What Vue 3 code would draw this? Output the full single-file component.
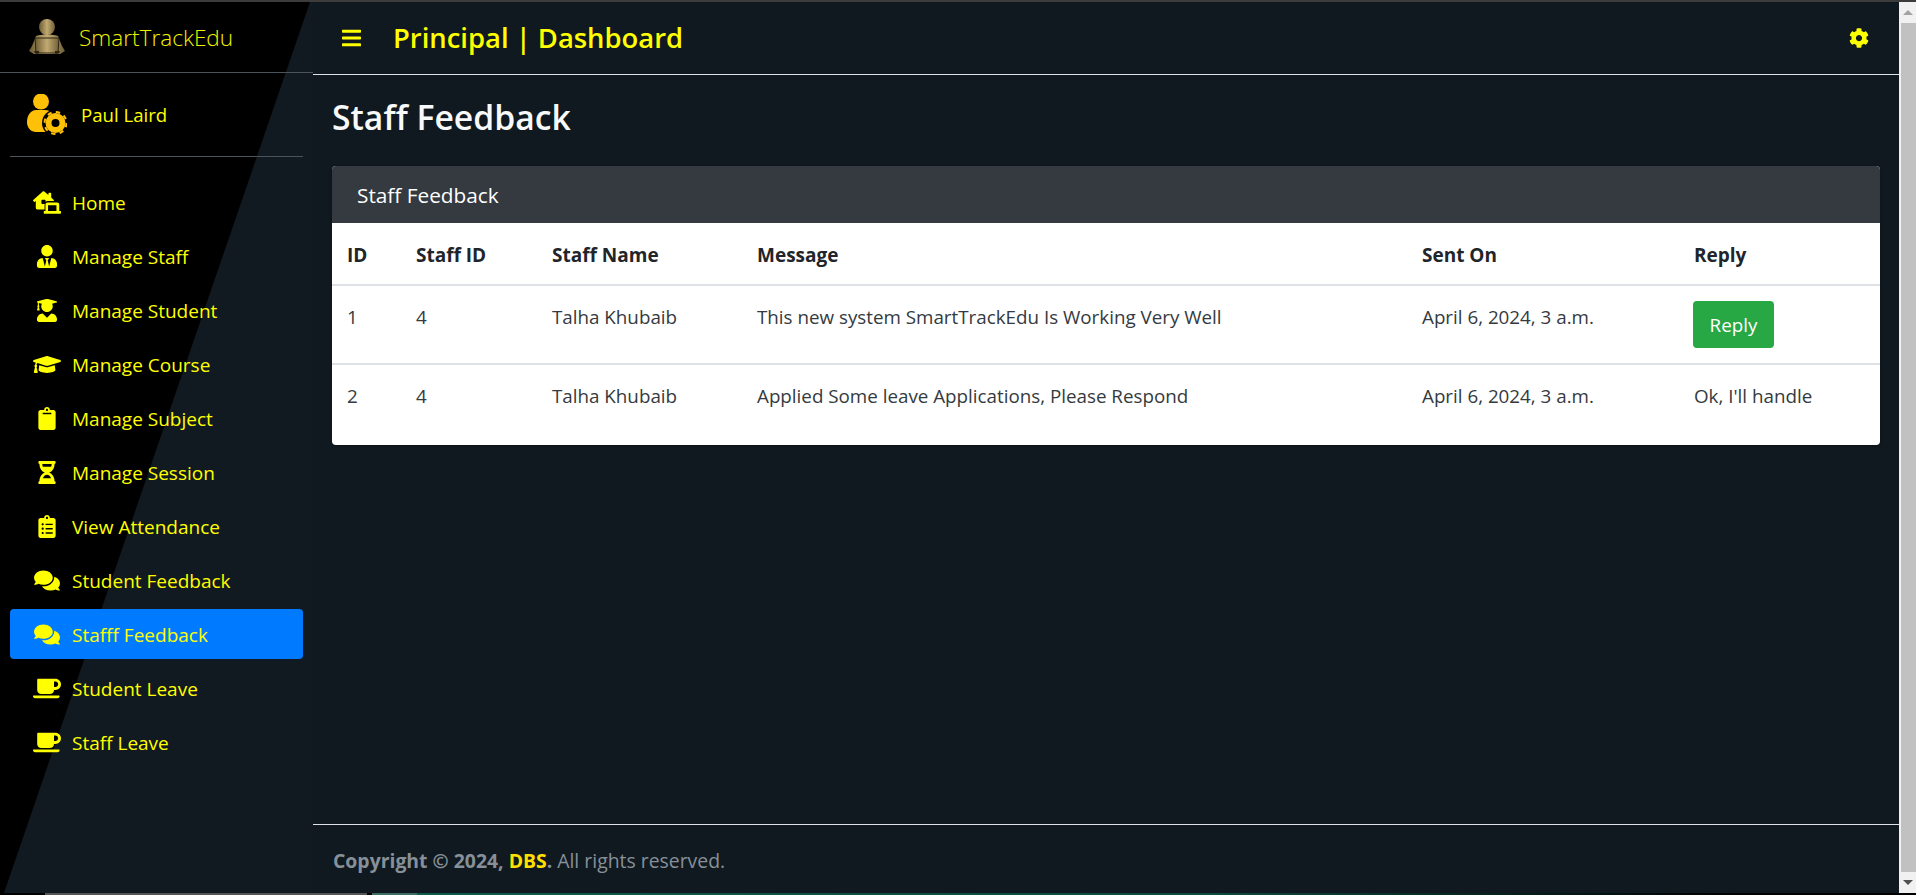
<template>
  <div class="page">
    <div class="top-strip"></div>
    <div class="window">
      <aside class="sidebar">
        <div class="brand">
          <svg class="brand-logo" viewBox="0 0 36 36">
            <defs>
              <linearGradient id="gold" x1="0" x2="1" y1="0" y2="0">
                <stop offset="0" stop-color="#6b5a33" />
                <stop offset="0.5" stop-color="#c2ab72" />
                <stop offset="1" stop-color="#6f5d36" />
              </linearGradient>
            </defs>
            <circle cx="18" cy="8" r="8" fill="url(#gold)" />
            <path d="M7 17c3-1 6-1.500 11-1.500s8 .5 11 1.500l4 10 3 5-5 3H5l-5-3 3-5z" fill="url(#gold)" />
            <path d="M6 19h24l-1 15H7z" fill="url(#gold)" stroke="#2c2413" stroke-width="1" />
            <path d="M5 32h5v2.500H6zM26 32h5l-1 2.500h-4z" fill="#2c2413" />
          </svg>
          <span class="brand-text">SmartTrackEdu</span>
        </div>
        <div class="user-panel">
          <svg class="user-icon" viewBox="0 0 40 41">
            <circle cx="14" cy="7.500" r="8" fill="#ffc107" />
            <path d="M0 28c0-7 4-12 9-12h9c3 0 5 1 7 3v19H9c-5 0-9-4-9-10z" fill="#ffc107" />
            <circle cx="28.500" cy="29" r="13.500" fill="#000" />
            <circle cx="28.500" cy="29" r="7" fill="none" stroke="#ffc107" stroke-width="6" />
            <circle cx="28.500" cy="29" r="11" fill="none" stroke="#ffc107" stroke-width="2" stroke-dasharray="4.300 4.340" />
          </svg>
          <span>Paul Laird</span>
        </div>
        <nav class="nav">
          <a v-for="item in navItems" :key="item.label" class="nav-link" :class="{ active: item.active }">
            <svg class="nav-icon" :viewBox="item.box">
              <path :d="item.d" fill-rule="evenodd" />
            </svg>
            <span class="nav-label">{{ item.label }}</span>
          </a>
        </nav>
      </aside>

      <div class="main">
        <header class="topbar">
          <svg class="bars" viewBox="0 0 448 512"><path :d="barsIcon" /></svg>
          <h2 class="topbar-title">Principal | Dashboard</h2>
          <svg class="cog" viewBox="0 0 512 512"><path :d="cogIcon" /></svg>
        </header>

        <main class="content">
          <h1>Staff Feedback</h1>
          <section class="card">
            <div class="card-header">Staff Feedback</div>
            <table>
              <thead>
                <tr>
                  <th class="col-id">ID</th>
                  <th class="col-staff">Staff ID</th>
                  <th class="col-name">Staff Name</th>
                  <th class="col-msg">Message</th>
                  <th class="col-sent">Sent On</th>
                  <th>Reply</th>
                </tr>
              </thead>
              <tbody>
                <tr v-for="row in rows" :key="row.id">
                  <td>{{ row.id }}</td>
                  <td>{{ row.staffId }}</td>
                  <td>{{ row.name }}</td>
                  <td>{{ row.message }}</td>
                  <td>{{ row.sent }}</td>
                  <td>
                    <button v-if="!row.reply" class="btn-reply">Reply</button>
                    <template v-else>{{ row.reply }}</template>
                  </td>
                </tr>
              </tbody>
            </table>
          </section>
        </main>

        <footer class="footer">
          <strong>Copyright © 2024, <span class="dbs">DBS</span>.</strong> All rights reserved.
        </footer>
      </div>

      <div class="scrollbar">
        <div class="scroll-btn"><i class="arrow-up"></i></div>
        <div class="scroll-thumb"></div>
        <div class="scroll-btn"><i class="arrow-down"></i></div>
      </div>
    </div>
    <div class="bottom-strip">
      <span class="task-gray"></span>
      <span class="task-light"></span>
      <span class="task-teal"></span>
    </div>
  </div>
</template>

<script setup>
const barsIcon =
  "M16 132h416c8.837 0 16-7.163 16-16V76c0-8.837-7.163-16-16-16H16C7.163 60 0 67.163 0 76v40c0 8.837 7.163 16 16 16zm0 160h416c8.837 0 16-7.163 16-16v-40c0-8.837-7.163-16-16-16H16c-8.837 0-16 7.163-16 16v40c0 8.837 7.163 16 16 16zm0 160h416c8.837 0 16-7.163 16-16v-40c0-8.837-7.163-16-16-16H16c-8.837 0-16 7.163-16 16v40c0 8.837 7.163 16 16 16z";
const cogIcon =
  "M487.4 315.7l-42.6-24.6c4.3-23.2 4.3-47 0-70.2l42.6-24.6c4.9-2.8 7.1-8.6 5.5-14-11.1-35.6-30-67.8-54.7-94.6-3.8-4.1-10-5.1-14.8-2.3L380.8 110c-17.9-15.4-38.5-27.3-60.8-35.1V25.8c0-5.6-3.9-10.5-9.4-11.7-36.7-8.2-74.3-7.8-109.2 0-5.5 1.2-9.4 6.1-9.4 11.7V75c-22.2 7.9-42.8 19.8-60.8 35.1L88.7 85.5c-4.9-2.8-11-1.9-14.8 2.3-24.7 26.7-43.6 58.9-54.7 94.6-1.7 5.4.6 11.2 5.5 14L67.3 221c-4.3 23.2-4.3 47 0 70.2l-42.6 24.6c-4.9 2.8-7.1 8.6-5.5 14 11.1 35.6 30 67.8 54.7 94.6 3.8 4.1 10 5.1 14.8 2.3l42.6-24.6c17.9 15.4 38.5 27.3 60.8 35.1v49.2c0 5.6 3.9 10.5 9.4 11.7 36.7 8.2 74.3 7.8 109.2 0 5.5-1.2 9.4-6.1 9.4-11.7v-49.2c22.2-7.9 42.8-19.8 60.8-35.1l42.6 24.6c4.9 2.8 11 1.9 14.8-2.3 24.7-26.7 43.6-58.9 54.7-94.6 1.5-5.5-.7-11.3-5.6-14.1zM256 336c-44.1 0-80-35.9-80-80s35.9-80 80-80 80 35.9 80 80-35.9 80-80 80z";

const comments =
  "M416 192c0-88.4-93.1-160-208-160S0 103.6 0 192c0 34.3 14.1 65.9 38 92-13.4 30.2-35.5 54.2-35.8 54.5-2.2 2.3-2.8 5.7-1.5 8.7S4.8 352 8 352c36.6 0 66.9-12.3 88.7-25 32.2 15.7 70.3 25 111.3 25 114.9 0 208-71.6 208-160zm122 220c23.9-26 38-57.7 38-92 0-66.9-53.5-124.2-129.3-148.1.9 6.6 1.3 13.3 1.3 20.1 0 105.9-107.7 192-240 192-10.8 0-21.3-.8-31.7-1.9C207.8 439.6 281.8 480 368 480c41 0 79.1-9.2 111.3-25 21.8 12.7 52.1 25 88.7 25 3.2 0 6.1-1.9 7.3-4.8 1.3-2.9.7-6.3-1.5-8.7-.3-.3-22.4-24.2-35.8-54.5z";
const coffee =
  "M192 384h192c53 0 96-43 96-96h32c70.6 0 128-57.4 128-128S582.6 32 512 32H120c-13.3 0-24 10.7-24 24v232c0 53 43 96 96 96zM512 96c35.3 0 64 28.7 64 64s-28.7 64-64 64h-32V96h32zm47.7 384H48.3c-47.6 0-61-64-36-64h583.3c25 0 11.8 64-35.9 64z";

const navItems = [
  {
    label: "Home",
    box: "0 0 640 512",
    d: "M272 288h-64a16 16 0 0 1-16-16v-64a16 16 0 0 1 16-16h64a16 16 0 0 1 16 16v37c11-13 27-21 44.8-21H470l6.4-7.5A16.5 16.5 0 0 0 480 207a16.3 16.3 0 0 0-4.8-10.6L416 144V48a16 16 0 0 0-16-16h-32a16 16 0 0 0-16 16v39.3L263.5 8.9C258 4 247.5 0 240 0s-17.9 4-23.5 8.9L4.8 196.4A16.2 16.2 0 0 0 0 207a16.4 16.4 0 0 0 3.6 9.4l18.7 21.3A16.2 16.2 0 0 0 33 242.5a16.5 16.5 0 0 0 9.3-3.5L64 219.9V384a32 32 0 0 0 32 32h168V320a32 32 0 0 1 8-32zM624 448h-24V304c0-26-21-48-48-48H333c-26 0-48 22-48 48v144h-24c-9 0-16 7-16 16v32c0 9 7 16 16 16h363c9 0 16-7 16-16v-32c0-9-7-16-16-16zM344 320h192v128H344z",
  },
  {
    label: "Manage Staff",
    box: "0 0 448 512",
    d: "M224 256c70.7 0 128-57.3 128-128S294.7 0 224 0 96 57.3 96 128s57.3 128 128 128zm95.8 32.6L272 480l-32-136 32-56h-96l32 56-32 136-47.8-191.4C56.9 292 0 350.3 0 422.4V464c0 26.5 21.5 48 48 48h352c26.5 0 48-21.5 48-48v-41.6c0-72.1-56.9-130.4-128.2-133.8z",
  },
  {
    label: "Manage Student",
    box: "0 0 448 512",
    d: "M319.4 320.6L224 416l-95.4-95.4C57.1 323.7 0 382.2 0 454.4v9.6c0 26.5 21.5 48 48 48h352c26.5 0 48-21.5 48-48v-9.6c0-72.2-57.1-130.7-128.6-133.8zM13.6 79.8l6.4 1.5v58.4c-7 4.2-12 11.5-12 20.3 0 8.4 4.6 15.4 11.1 19.7L3.5 242c-1.7 6.9 2.1 14 7.6 14h41.8c5.5 0 9.3-7.1 7.6-14l-15.6-62.3C51.4 175.4 56 168.4 56 160c0-8.8-5-16.1-12-20.3V87.1l66 15.9c-8.6 17.2-14 36.4-14 57 0 70.7 57.3 128 128 128s128-57.3 128-128c0-20.6-5.3-39.8-14-57l96.3-23.2c18.2-4.4 18.2-27.1 0-31.5l-190.4-46c-13-3.1-26.7-3.1-39.7 0L13.6 48.2c-18.1 4.4-18.1 27.2 0 31.6z",
  },
  {
    label: "Manage Course",
    box: "0 0 640 512",
    d: "M622.34 153.2L343.4 67.5c-15.2-4.67-31.6-4.67-46.79 0L17.66 153.2c-23.54 7.23-23.54 38.36 0 45.59l48.63 14.94c-10.67 13.19-17.23 29.28-17.88 46.9C38.78 266.15 32 276.11 32 288c0 10.78 5.68 19.85 13.86 25.65L20.33 428.53C18.11 438.52 25.71 448 35.94 448h56.11c10.24 0 17.84-9.48 15.62-19.47L82.14 313.65C90.32 307.85 96 298.78 96 288c0-11.57-6.47-21.25-15.66-26.87.76-15.02 8.44-28.3 20.69-36.72L296.6 284.5c9.06 2.78 26.44 6.25 46.79 0l278.95-85.7c23.55-7.24 23.55-38.36 0-45.6zM352.79 315.09c-28.53 8.76-52.84 3.92-65.59 0l-145.02-44.55L128 384c0 35.35 85.96 64 192 64s192-28.65 192-64l-14.18-113.47-145.03 44.56z",
  },
  {
    label: "Manage Subject",
    box: "0 0 384 512",
    d: "M384 112v352c0 26.51-21.49 48-48 48H48c-26.51 0-48-21.49-48-48V112c0-26.51 21.49-48 48-48h80c0-35.29 28.71-64 64-64s64 28.71 64 64h80c26.51 0 48 21.49 48 48zM192 40c-13.255 0-24 10.745-24 24s10.745 24 24 24 24-10.745 24-24-10.745-24-24-24m96 114v-20a6 6 0 0 0-6-6H102a6 6 0 0 0-6 6v20a6 6 0 0 0 6 6h180a6 6 0 0 0 6-6z",
  },
  {
    label: "Manage Session",
    box: "0 0 384 512",
    d: "M360 0H24C10.745 0 0 10.745 0 24v16c0 13.255 10.745 24 24 24 0 90.965 51.016 167.734 120.842 192C75.016 280.266 24 357.035 24 448c-13.255 0-24 10.745-24 24v16c0 13.255 10.745 24 24 24h336c13.255 0 24-10.745 24-24v-16c0-13.255-10.745-24-24-24 0-90.965-51.016-167.734-120.842-192C308.984 231.734 360 154.965 360 64c13.255 0 24-10.745 24-24V24c0-13.255-10.745-24-24-24zm-75.078 384H99.08c17.059-46.797 52.096-80 92.92-80 40.821 0 75.862 33.196 92.922 80zm.019-256H99.078C91.988 108.548 88 86.748 88 64h208c0 22.805-3.987 44.587-11.059 64z",
  },
  {
    label: "View Attendance",
    box: "0 0 384 512",
    d: "M336 64h-80c0-35.3-28.7-64-64-64s-64 28.7-64 64H48C21.5 64 0 85.5 0 112v352c0 26.5 21.5 48 48 48h288c26.5 0 48-21.5 48-48V112c0-26.5-21.5-48-48-48zM96 424c-13.3 0-24-10.7-24-24s10.7-24 24-24 24 10.7 24 24-10.7 24-24 24zm0-96c-13.3 0-24-10.7-24-24s10.7-24 24-24 24 10.7 24 24-10.7 24-24 24zm0-96c-13.3 0-24-10.7-24-24s10.7-24 24-24 24 10.7 24 24-10.7 24-24 24zm96-192c13.3 0 24 10.7 24 24s-10.7 24-24 24-24-10.7-24-24 10.7-24 24-24zm128 368c0 4.4-3.6 8-8 8H168c-4.4 0-8-3.6-8-8v-16c0-4.4 3.6-8 8-8h144c4.4 0 8 3.6 8 8v16zm0-96c0 4.4-3.6 8-8 8H168c-4.4 0-8-3.6-8-8v-16c0-4.4 3.6-8 8-8h144c4.4 0 8 3.6 8 8v16zm0-96c0 4.4-3.6 8-8 8H168c-4.4 0-8-3.6-8-8v-16c0-4.4 3.6-8 8-8h144c4.4 0 8 3.6 8 8v16z",
  },
  { label: "Student Feedback", box: "0 0 576 512", d: comments },
  { label: "Stafff Feedback", box: "0 0 576 512", d: comments, active: true },
  { label: "Student Leave", box: "0 0 640 512", d: coffee },
  { label: "Staff Leave", box: "0 0 640 512", d: coffee },
];

const rows = [
  {
    id: 1,
    staffId: 4,
    name: "Talha Khubaib",
    message: "This new system SmartTrackEdu Is Working Very Well",
    sent: "April 6, 2024, 3 a.m.",
    reply: "",
  },
  {
    id: 2,
    staffId: 4,
    name: "Talha Khubaib",
    message: "Applied Some leave Applications, Please Respond",
    sent: "April 6, 2024, 3 a.m.",
    reply: "Ok, I'll handle",
  },
];
</script>

<style>
html,
body {
  margin: 0;
  height: 100%;
  overflow: hidden;
  background: #000;
}
</style>

<style scoped>
.page {
  height: 895px;
  display: flex;
  flex-direction: column;
  font-family: "Open Sans", "Liberation Sans", sans-serif;
  font-size: 19px;
  color: #212529;
  background: #111920;
}

.top-strip {
  height: 2px;
  background: #3c3c3c;
}

.window {
  flex: 1;
  display: flex;
  min-height: 0;
}

.bottom-strip {
  height: 2px;
  display: flex;
  background: #000;
}

.task-gray {
  width: 322px;
  margin-left: 45px;
  background: #555;
}

.task-light {
  width: 45px;
  margin-left: 5px;
  background: #3d6e66;
}

.task-teal {
  width: 1320px;
  background: linear-gradient(90deg, #0d5a4d, #0d4a41 60%, #000);
}

/* sidebar */
.sidebar {
  position: relative;
  width: 313px;
  flex-shrink: 0;
  background: #121a21;
  color: #ff0;
}

.sidebar::before {
  content: "";
  position: absolute;
  inset: 0;
  background: #000;
  clip-path: polygon(0 0, 310px 0, 4px 100%, 0 100%);
}

.brand,
.user-panel,
.nav {
  position: relative;
}

.brand {
  height: 70px;
  display: flex;
  align-items: center;
  gap: 14px;
  padding-left: 29px;
  border-bottom: 1px solid #4b545c;
}

.brand-logo {
  width: 36px;
  height: 36px;
}

.brand-text {
  font-size: 22.6px;
  font-weight: 300;
  color: #f2f200;
}

.user-panel {
  height: 83px;
  margin: 0 10px;
  padding-left: 17px;
  display: flex;
  align-items: center;
  gap: 14px;
  font-size: 18.6px;
  border-bottom: 1px solid #4b545c;
}

.user-icon {
  width: 40px;
  height: 41px;
}

.nav {
  padding: 20px 10px 0;
  display: flex;
  flex-direction: column;
  gap: 4px;
}

.nav-link {
  height: 50px;
  display: flex;
  align-items: center;
  gap: 11px;
  padding-left: 23px;
  border-radius: 4px;
}

.nav-link.active {
  background: #007bff;
}

.nav-label {
  padding-top: 2px;
}

.nav-icon {
  width: 28px;
  height: 23px;
  fill: #ff0;
}

/* main column */
.main {
  flex: 1;
  min-width: 0;
  display: flex;
  flex-direction: column;
}

.topbar {
  height: 72px;
  display: flex;
  align-items: center;
  padding: 0 30px 0 29px;
  border-bottom: 1px solid #dee2e6;
}

.bars {
  width: 19px;
  height: 22px;
  fill: #ff0;
}

.topbar-title {
  margin: -2px 0 0 32px;
  flex: 1;
  font-size: 27.4px;
  font-weight: 600;
  color: #ff0;
}

.cog {
  width: 20px;
  height: 20px;
  fill: #ff0;
}

.content {
  flex: 1;
  padding: 0 19px;
}

h1 {
  margin: 0;
  height: 91px;
  line-height: 84px;
  font-size: 33.7px;
  font-weight: 600;
  color: #f8f9fa;
}

.card {
  background: #fff;
  border-radius: 4px;
  overflow: hidden;
  box-shadow: 0 0 1px rgba(0, 0, 0, 0.13), 0 1px 3px rgba(0, 0, 0, 0.2);
}

.card-header {
  height: 57px;
  display: flex;
  align-items: center;
  padding-left: 25px;
  font-size: 20.8px;
  color: #fff;
  background: #343a40;
}

table {
  width: 100%;
  border-collapse: separate;
  border-spacing: 0;
}

th,
td {
  box-sizing: border-box;
  padding: 0 0 0 15px;
  text-align: left;
}

th {
  height: 63px;
  padding-top: 2px;
  font-weight: 700;
  vertical-align: middle;
  border-bottom: 2px solid #dee2e6;
}

td {
  height: 79px;
  padding-top: 18px;
  font-size: 18.8px;
  vertical-align: top;
  color: #343a40;
}

tbody tr:first-child td {
  border-bottom: 2px solid #dee2e6;
}

tbody tr:last-child td {
  height: 80px;
}

.col-id {
  width: 69px;
}
.col-staff {
  width: 136px;
}
.col-name {
  width: 205px;
}
.col-msg {
  width: 665px;
}
.col-sent {
  width: 272px;
}

.btn-reply {
  display: block;
  width: 81px;
  height: 47px;
  margin: -3px 0 0 -1px;
  padding: 0;
  border: 0;
  border-radius: 4px;
  font: inherit;
  color: #fff;
  background: #28a745;
}

.footer {
  height: 69px;
  display: flex;
  align-items: center;
  gap: 5px;
  padding: 3px 0 0 20px;
  box-sizing: border-box;
  font-size: 19.4px;
  color: #869099;
  border-top: 1px solid #dee2e6;
}

.dbs {
  color: #ffdf00;
}

/* window scrollbar */
.scrollbar {
  width: 17px;
  flex-shrink: 0;
  display: flex;
  flex-direction: column;
  background: #f1f1f1;
}

.scroll-btn {
  height: 21px;
  display: flex;
  align-items: center;
  justify-content: center;
}

.scroll-thumb {
  flex: 1;
  margin-left: 2px;
  background: #c1c1c1;
}

.arrow-up,
.arrow-down {
  width: 0;
  height: 0;
  border-left: 5px solid transparent;
  border-right: 5px solid transparent;
}

.arrow-up {
  border-bottom: 5px solid #a3a3a3;
}

.arrow-down {
  border-top: 5px solid #505050;
}
</style>
